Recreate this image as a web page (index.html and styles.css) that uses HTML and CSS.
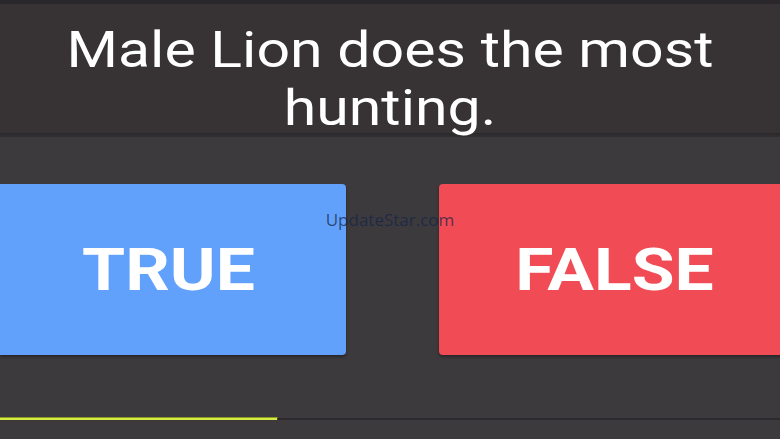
FILE: index.html
```html
<!DOCTYPE html>
<html>
<head>
<meta charset="utf-8">
<link rel="stylesheet" href="styles.css">
</head>
<body>
<div class="screen">
  <div class="topstrip"></div>
  <header class="question">
    <h1 class="question-text">Male Lion does the most<br>hunting.</h1>
  </header>
  <div class="shadowline"></div>
  <main class="answers">
    <button class="answer answer-true"><span class="answer-label">TRUE</span></button>
    <button class="answer answer-false"><span class="answer-label">FALSE</span></button>
  </main>
  <div class="progress">
    <div class="progress-fill" style="width:278px"></div>
  </div>
  <div class="watermark">UpdateStar.com</div>
</div>
</body>
</html>
```

FILE: styles.css
```css
html, body {
  margin: 0;
  padding: 0;
  background: #3d3a3e;
}
.screen {
  position: relative;
  width: 780px;
  height: 439px;
  overflow: hidden;
  display: flex;
  flex-direction: column;
  background: #3d3a3e;
  font-family: Roboto, "Liberation Sans", sans-serif;
}
.topstrip {
  height: 4px;
  background: #29272a;
  flex: none;
}
.question {
  height: 129px;
  flex: none;
  background: #373335;
  box-sizing: border-box;
  padding-top: 17px;
}
.question-text {
  margin: 0;
  color: #ffffff;
  font-weight: 400;
  font-size: 50px;
  line-height: 58px;
  text-align: center;
  transform: scaleX(1.18);
}
.shadowline {
  height: 4px;
  flex: none;
  background: linear-gradient(#2a282a, #323033);
}
.answers {
  display: flex;
  gap: 93px;
  margin-top: 47px;
  height: 171px;
  flex: none;
}
.answer {
  border: none;
  margin: 0;
  padding: 0;
  display: flex;
  align-items: center;
  justify-content: center;
  box-shadow: 0 2px 3px rgba(0,0,0,0.35);
  font-family: Roboto, "Liberation Sans", sans-serif;
  color: #ffffff;
}
.answer-true {
  flex: 0 0 346px;
  background: #62a1fb;
  border-radius: 0 4px 4px 0;
  padding-right: 10px;
  box-sizing: border-box;
}
.answer-false {
  flex: 0 0 352px;
  background: #f14b55;
  border-radius: 4px 0 0 4px;
  padding-right: 2px;
  box-sizing: border-box;
}
.answer-label {
  font-size: 60px;
  font-weight: 700;
  line-height: 1;
  display: inline-block;
  transform: scaleX(1.16);
}
.progress {
  margin-top: 62px;
  height: 3px;
  flex: none;
  display: flex;
  align-items: center;
  background: linear-gradient(transparent 0, transparent 1px, #2c2a2e 1px, #2c2a2e 3px);
}
.progress-fill {
  height: 3px;
  box-sizing: border-box;
  background: #d6ec3e;
  border-top: 1px solid #8a9a2a;
  border-right: 1px solid #4a4a30;
}
.watermark {
  position: absolute;
  left: 0;
  right: 0;
  top: 208px;
  text-align: center;
  font-family: "Open Sans", sans-serif;
  font-size: 17px;
  color: rgba(18, 36, 72, 0.72);
}
```
